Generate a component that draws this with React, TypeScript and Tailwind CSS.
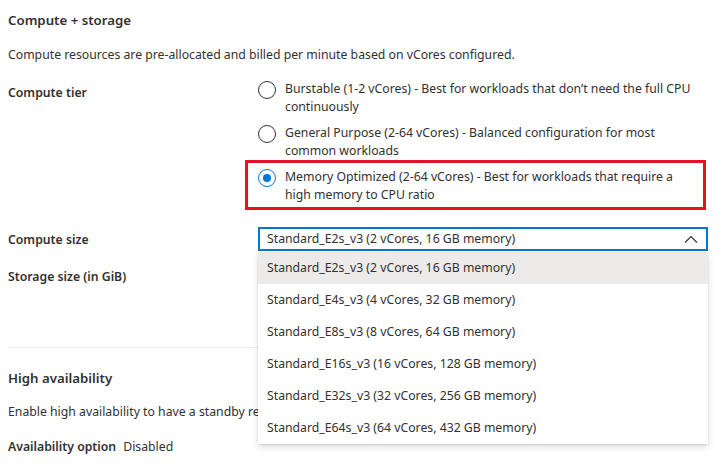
import React from "react";

const sizes = [
  "Standard_E2s_v3 (2 vCores, 16 GB memory)",
  "Standard_E4s_v3 (4 vCores, 32 GB memory)",
  "Standard_E8s_v3 (8 vCores, 64 GB memory)",
  "Standard_E16s_v3 (16 vCores, 128 GB memory)",
  "Standard_E32s_v3 (32 vCores, 256 GB memory)",
  "Standard_E64s_v3 (64 vCores, 432 GB memory)",
];

function Radio({ checked, lines }: { checked?: boolean; lines: string[] }) {
  return (
    <div className="flex items-start">
      <div
        className={
          checked
            ? "mt-[1px] w-[18px] h-[18px] rounded-full border border-[#0078d4] flex items-center justify-center shrink-0"
            : "mt-[1px] w-[18px] h-[18px] rounded-full border border-[#323130] shrink-0"
        }
      >
        {checked && <div className="w-[8px] h-[8px] rounded-full bg-[#0078d4]" />}
      </div>
      <div className="ml-[9px] leading-[18px] whitespace-nowrap">
        {lines.map((l, i) => (
          <div key={i}>{l}</div>
        ))}
      </div>
    </div>
  );
}

export default function App() {
  return (
    <div
      className="relative w-[721px] h-[468px] overflow-hidden bg-white text-[12.25px] text-[#323130]"
      style={{ fontFamily: '"Noto Sans", "Open Sans", sans-serif' }}
    >
      <div className="pl-[8px] pt-[10px]">
        <div className="text-[13.25px] font-semibold leading-[20px]">Compute + storage</div>
        <div className="mt-[16px] leading-[18px]">
          Compute resources are pre-allocated and billed per minute based on vCores configured.
        </div>

        <div className="mt-[16px] flex">
          <div className="w-[250px] pt-[4px] font-semibold leading-[18px]">Compute tier</div>
          <div className="flex flex-col gap-[8px] w-[450px]">
            <Radio lines={["Burstable (1-2 vCores) - Best for workloads that don\u2019t need the full CPU", "continuously"]} />
            <Radio lines={["General Purpose (2-64 vCores) - Balanced configuration for most", "common workloads"]} />
            <div className="relative">
              <Radio checked lines={["Memory Optimized (2-64 vCores) - Best for workloads that require a", "high memory to CPU ratio"]} />
              <div className="absolute top-[-8px] left-[-13px] w-[461px] h-[50px] border-[3px] border-[#e81123] pointer-events-none" />
            </div>
          </div>
        </div>

        <div className="mt-[23px] flex">
          <div className="w-[250px] pt-[4px] font-semibold leading-[18px]">Compute size</div>
          <div className="relative w-[450px]">
            <div className="h-[24px] border-2 border-[#0078d4] flex items-center justify-between pl-[7px] pr-[8px]">
              <span className="leading-[18px]">{sizes[0]}</span>
              <svg width="14" height="8" viewBox="0 0 14 8" className="text-[#323130]">
                <path d="M1 7.5 L7 1.5 L13 7.5" fill="none" stroke="currentColor" strokeWidth="1.1" />
              </svg>
            </div>
            <div className="absolute left-0 top-[25px] w-[450px] bg-white z-10 shadow-[0_3.2px_7.2px_rgba(0,0,0,0.132),0_0.6px_1.8px_rgba(0,0,0,0.108)]">
              {sizes.map((s, i) => (
                <div
                  key={s}
                  className={
                    i === 0
                      ? "h-[32px] flex items-center pl-[9px] bg-[#edebe9]"
                      : "h-[32px] flex items-center pl-[9px]"
                  }
                >
                  {s}
                </div>
              ))}
            </div>
          </div>
        </div>

        <div className="mt-[17px] font-semibold leading-[18px]">Storage size (in GiB)</div>

        <div className="mt-[61px] mr-[13px] h-px bg-[#edebe9]" />

        <div className="mt-[20px] text-[13.25px] font-semibold leading-[20px]">High availability</div>
        <div className="mt-[15px] leading-[18px] w-[250px] overflow-hidden whitespace-nowrap">
          Enable high availability to have a standby replica in the same or another zone.
        </div>
        <div className="mt-[17px] leading-[18px]">
          <span className="font-semibold">Availability option</span>
          <span className="ml-[7px]">Disabled</span>
        </div>
      </div>
    </div>
  );
}
